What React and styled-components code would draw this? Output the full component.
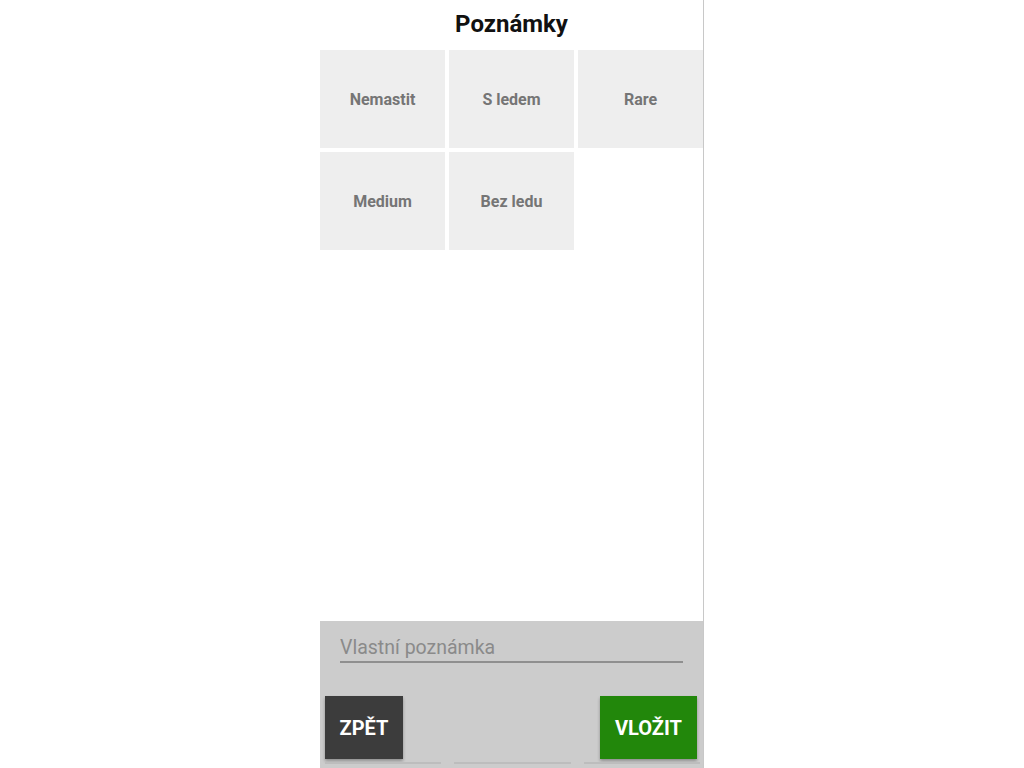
import React, { useState } from 'react';
import styled, { createGlobalStyle } from 'styled-components';

const GlobalStyle = createGlobalStyle`
  html, body {
    margin: 0;
    padding: 0;
    background: #fff;
    font-family: Roboto, "Noto Sans", sans-serif;
  }
`;

const Page = styled.div`
  display: flex;
  justify-content: center;
  height: 768px;
  overflow: hidden;
`;

const Panel = styled.div`
  width: 383px;
  height: 768px;
  border-right: 1px solid #c8c8c8;
  display: flex;
  flex-direction: column;
  background: #fff;
`;

const Title = styled.h1`
  margin: 0;
  height: 50px;
  line-height: 48px;
  text-align: center;
  font-size: 24px;
  font-weight: 700;
  color: #111;
`;

const Grid = styled.div`
  display: grid;
  grid-template-columns: repeat(3, 1fr);
  grid-auto-rows: 98px;
  gap: 4px;
`;

const Tile = styled.button`
  border: none;
  margin: 0;
  padding: 0;
  background: ${(p) => (p.$active ? '#d6d6d6' : '#eeeeee')};
  color: #757575;
  font-family: Roboto, sans-serif;
  font-size: 16px;
  font-weight: 700;
  cursor: pointer;
`;

const Spacer = styled.div`
  flex: 1;
`;

const Bottom = styled.div`
  height: 147px;
  background: #cccccc;
  display: flex;
  flex-direction: column;
`;

const Field = styled.input`
  margin: 13px 20px 0 20px;
  height: 27px;
  padding: 0;
  border: none;
  border-bottom: 2px solid #8f8f8f;
  background: transparent;
  font-family: Roboto, sans-serif;
  font-size: 19.5px;
  color: #444;
  outline: none;

  &::placeholder {
    color: #8a8a8a;
  }
`;

const Actions = styled.div`
  display: flex;
  justify-content: space-between;
  padding: 33px 6px 0 5px;
`;

const ActionButton = styled.button`
  height: 63px;
  padding: 0 14px;
  min-width: ${(p) => (p.$wide ? '97px' : '78px')};
  border: none;
  background: ${(p) => p.$bg};
  color: #fff;
  font-family: Roboto, sans-serif;
  font-size: 20px;
  font-weight: 700;
  box-shadow: 0 2px 3px rgba(0, 0, 0, 0.3);
  cursor: pointer;
`;

const Ghosts = styled.div`
  display: grid;
  grid-template-columns: repeat(3, 1fr);
  gap: 13px;
  padding: 3px 3px 0 5px;
`;

const Ghost = styled.div`
  height: 2px;
  background: #bdbdbd;
`;

const notes = ['Nemastit', 'S ledem', 'Rare', 'Medium', 'Bez ledu'];

const App = () => {
  const [selected, setSelected] = useState([]);
  const [custom, setCustom] = useState('');

  const toggle = (n) =>
    setSelected((s) => (s.includes(n) ? s.filter((x) => x !== n) : [...s, n]));

  return (
    <Page>
      <GlobalStyle />
      <Panel>
        <Title>Poznámky</Title>
        <Grid>
          {notes.map((n) => (
            <Tile key={n} $active={selected.includes(n)} onClick={() => toggle(n)}>
              {n}
            </Tile>
          ))}
        </Grid>
        <Spacer />
        <Bottom>
          <Field
            placeholder="Vlastní poznámka"
            value={custom}
            onChange={(e) => setCustom(e.target.value)}
          />
          <Actions>
            <ActionButton $bg="#3c3c3c">ZPĚT</ActionButton>
            <ActionButton $bg="#22870b" $wide>VLOŽIT</ActionButton>
          </Actions>
          <Ghosts>
            <Ghost />
            <Ghost />
            <Ghost />
          </Ghosts>
        </Bottom>
      </Panel>
    </Page>
  );
};

export default App;
